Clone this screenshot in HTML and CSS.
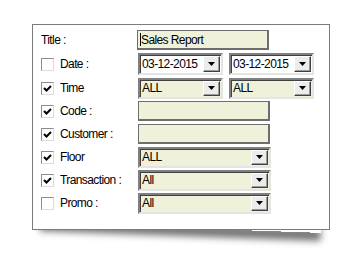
FILE: index.html
```
<!DOCTYPE html>
<html>
<head>
<meta charset="utf-8">
<title>Report filter</title>
<link rel="stylesheet" href="styles.css">
</head>
<body>
<div class="sheet">
<div class="panel">

	<div class="row">
		<span class="lbl lbl-title">Title :</span>
		<div class="edit"><span class="caret"></span>Sales Report</div>
	</div>

	<div class="row row-date">
		<span class="chk"></span><span class="lbl">Date :</span>
		<div class="pair">
			<div class="combo combo-white"><span class="val">03-12-2015</span><span class="btn"><svg width="7" height="4" viewBox="0 0 7 4"><path d="M0 0H7L3.5 4Z" fill="#000"/></svg></span></div>
			<div class="combo combo-white"><span class="val">03-12-2015</span><span class="btn"><svg width="7" height="4" viewBox="0 0 7 4"><path d="M0 0H7L3.5 4Z" fill="#000"/></svg></span></div>
		</div>
	</div>

	<div class="row">
		<span class="chk on"><svg width="9" height="9" viewBox="0 0 9 9"><path d="M1 4L3.5 6.5L8 2" fill="none" stroke="#000" stroke-width="2"/></svg></span><span class="lbl">Time</span>
		<div class="pair">
			<div class="combo"><span class="val">ALL</span><span class="btn"><svg width="7" height="4" viewBox="0 0 7 4"><path d="M0 0H7L3.5 4Z" fill="#000"/></svg></span></div>
			<div class="combo"><span class="val">ALL</span><span class="btn"><svg width="7" height="4" viewBox="0 0 7 4"><path d="M0 0H7L3.5 4Z" fill="#000"/></svg></span></div>
		</div>
	</div>

	<div class="row">
		<span class="chk on"><svg width="9" height="9" viewBox="0 0 9 9"><path d="M1 4L3.5 6.5L8 2" fill="none" stroke="#000" stroke-width="2"/></svg></span><span class="lbl">Code :</span>
		<div class="edit"></div>
	</div>

	<div class="row">
		<span class="chk on"><svg width="9" height="9" viewBox="0 0 9 9"><path d="M1 4L3.5 6.5L8 2" fill="none" stroke="#000" stroke-width="2"/></svg></span><span class="lbl">Customer :</span>
		<div class="edit"></div>
	</div>

	<div class="row">
		<span class="chk on"><svg width="9" height="9" viewBox="0 0 9 9"><path d="M1 4L3.5 6.5L8 2" fill="none" stroke="#000" stroke-width="2"/></svg></span><span class="lbl">Floor</span>
		<div class="combo combo-wide"><span class="val">ALL</span><span class="btn"><svg width="7" height="4" viewBox="0 0 7 4"><path d="M0 0H7L3.5 4Z" fill="#000"/></svg></span></div>
	</div>

	<div class="row">
		<span class="chk on"><svg width="9" height="9" viewBox="0 0 9 9"><path d="M1 4L3.5 6.5L8 2" fill="none" stroke="#000" stroke-width="2"/></svg></span><span class="lbl">Transaction :</span>
		<div class="combo combo-wide"><span class="val">All</span><span class="btn"><svg width="7" height="4" viewBox="0 0 7 4"><path d="M0 0H7L3.5 4Z" fill="#000"/></svg></span></div>
	</div>

	<div class="row">
		<span class="chk"></span><span class="lbl">Promo :</span>
		<div class="combo combo-wide"><span class="val">All</span><span class="btn"><svg width="7" height="4" viewBox="0 0 7 4"><path d="M0 0H7L3.5 4Z" fill="#000"/></svg></span></div>
	</div>

</div>
<div class="ombre"></div>
</div>
</body>
</html>
```
FILE: styles.css
```
body {
margin: 0;
background: #ffffff;
font-family: "Liberation Sans", Arial, sans-serif;
font-size: 12px;
letter-spacing: -0.6px;
color: #000000;
}
.sheet {
width: 298px;
margin-left: 32px;
padding-top: 24px;
padding-bottom: 31px;
}
/* ombre courbe sous le cadre */
.ombre {
height: 12px;
margin: -14px 9px 0 8px;
box-shadow: 0 8px 7px rgba(0, 0, 0, 0.55);
transform: rotate(2deg);
}
.panel {
position: relative;
z-index: 1;
width: 298px;
height: 206px;
box-sizing: border-box;
border: 1px solid #7b7b7b;
background: #ffffff;
padding: 5px 0 0 8px;
display: flex;
flex-direction: column;
gap: 3px;
}
.row {
display: flex;
align-items: center;
height: 20px;
}
.row-date {
height: 22px;
}
.lbl {
width: 78px;
white-space: nowrap;
}
.lbl-title {
width: 96px;
}
.chk {
width: 11px;
height: 11px;
border: 1px solid;
border-color: #8c8c8c #dcdcdc #dcdcdc #8c8c8c;
background: #ffffff;
margin-right: 6px;
display: flex;
align-items: center;
justify-content: center;
flex: none;
}
.edit {
width: 132px;
height: 20px;
box-sizing: border-box;
border: 1px solid #6e6e6e;
border-right-width: 2px;
border-bottom-width: 2px;
background: #eff1da;
padding-left: 2px;
display: flex;
align-items: center;
}
.caret {
width: 1px;
height: 13px;
background: #000000;
}
.pair {
display: flex;
gap: 6px;
}
.combo {
width: 85px;
height: 21px;
box-sizing: border-box;
border: 2px solid;
border-color: #808080 #e4e4e4 #e4e4e4 #808080;
box-shadow: inset 1px 1px 0 #404040;
background: #eff1da;
display: flex;
align-items: center;
justify-content: space-between;
padding: 1px 1px 1px 2px;
}
.combo-white {
background: #ffffff;
height: 22px;
}
.combo-wide {
width: 133px;
}
.val {
white-space: nowrap;
}
.btn {
width: 17px;
height: 100%;
box-sizing: border-box;
background: #ececec;
border: 1px solid;
border-color: #ffffff #404040 #404040 #ffffff;
box-shadow: inset -1px -1px 0 #9a9a9a;
display: flex;
align-items: center;
justify-content: center;
}
```
